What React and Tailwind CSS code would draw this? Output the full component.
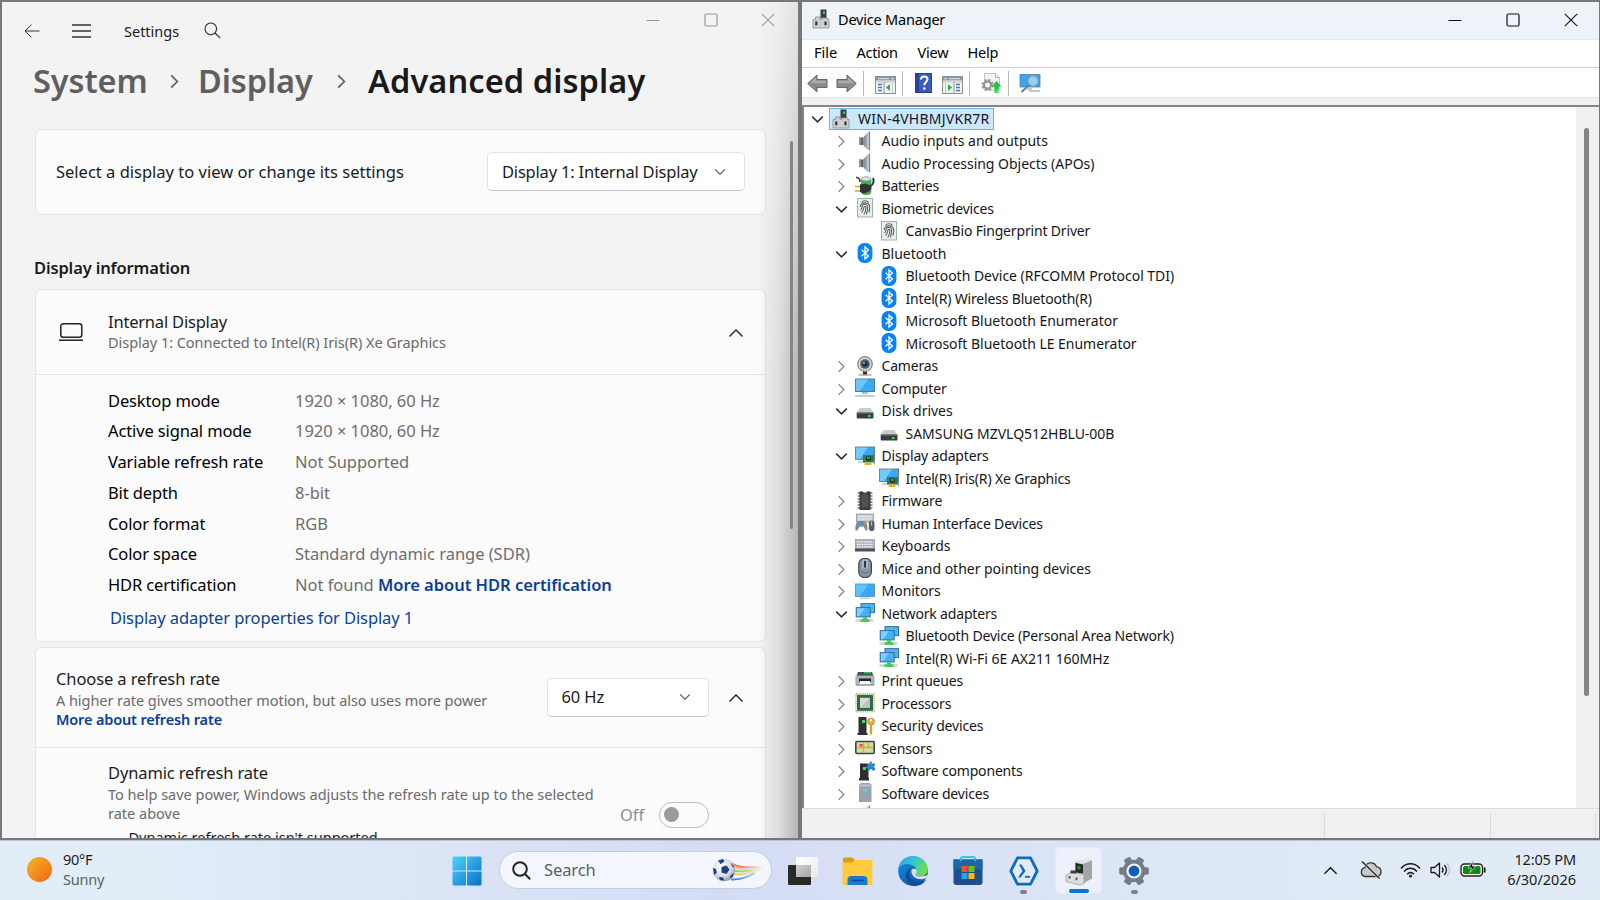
const DISPLAY_INFO = [
  { label: 'Desktop mode', value: '1920 × 1080, 60 Hz' },
  { label: 'Active signal mode', value: '1920 × 1080, 60 Hz' },
  { label: 'Variable refresh rate', value: 'Not Supported' },
  { label: 'Bit depth', value: '8-bit' },
  { label: 'Color format', value: 'RGB' },
  { label: 'Color space', value: 'Standard dynamic range (SDR)' },
  { label: 'HDR certification', value: 'Not found', link: 'More about HDR certification' },
];

const DEVICES = [
  { label: 'Audio inputs and outputs', icon: SpeakerIcon },
  { label: 'Audio Processing Objects (APOs)', icon: SpeakerIcon },
  { label: 'Batteries', icon: BatteriesIcon },
  { label: 'Biometric devices', icon: FingerprintIcon, children: ['CanvasBio Fingerprint Driver'] },
  {
    label: 'Bluetooth',
    icon: BluetoothIcon,
    children: [
      'Bluetooth Device (RFCOMM Protocol TDI)',
      'Intel(R) Wireless Bluetooth(R)',
      'Microsoft Bluetooth Enumerator',
      'Microsoft Bluetooth LE Enumerator',
    ],
  },
  { label: 'Cameras', icon: CameraIcon },
  { label: 'Computer', icon: ComputerIcon },
  { label: 'Disk drives', icon: DiskIcon, children: ['SAMSUNG MZVLQ512HBLU-00B'] },
  { label: 'Display adapters', icon: DisplayAdapterIcon, children: ['Intel(R) Iris(R) Xe Graphics'] },
  { label: 'Firmware', icon: FirmwareIcon },
  { label: 'Human Interface Devices', icon: HidIcon },
  { label: 'Keyboards', icon: KeyboardIcon },
  { label: 'Mice and other pointing devices', icon: MouseIcon },
  { label: 'Monitors', icon: MonitorIcon },
  {
    label: 'Network adapters',
    icon: NetworkIcon,
    children: ['Bluetooth Device (Personal Area Network)', 'Intel(R) Wi-Fi 6E AX211 160MHz'],
  },
  { label: 'Print queues', icon: PrinterIcon },
  { label: 'Processors', icon: ProcessorIcon },
  { label: 'Security devices', icon: SecurityIcon },
  { label: 'Sensors', icon: SensorIcon },
  { label: 'Software components', icon: SoftwareComponentIcon },
  { label: 'Software devices', icon: SoftwareDeviceIcon },
];

// Labels that keep the font's natural spacing
const NORMAL_SPACING = [
  'Audio inputs and outputs',
  'Bluetooth',
  'Bluetooth Device (RFCOMM Protocol TDI)',
  'Disk drives',
  'SAMSUNG MZVLQ512HBLU-00B',
  'Keyboards',
  'Mice and other pointing devices',
  'Monitors',
  'Intel(R) Wi-Fi 6E AX211 160MHz',
  'Audio Processing Objects (APOs)',
  'Microsoft Bluetooth Enumerator',
  'Microsoft Bluetooth LE Enumerator',
];

/* ---------- Tree icons (20x20) ---------- */

function Svg20({ children }) {
  return <svg viewBox="0 0 20 20" className="w-5 h-5 shrink-0">{children}</svg>;
}

function SpeakerIcon() {
  return (
    <Svg20>
      <path d="M4 6.500h4v7.500H4z" fill="#5d656d" />
      <path d="M4 6.500h2v7.500H4z" fill="#8d959c" />
      <path d="M8 6.500L13 1.500v17.500L8 14z" fill="#8e979f" />
      <path d="M11.500 2.500L15 0v20l-3.500-3.500z" fill="#bcc3c9" />
      <path d="M14.600 0.600v18.800" stroke="#6d757c" strokeWidth="0.900" />
    </Svg20>
  );
}

function BatteriesIcon() {
  return (
    <Svg20>
      <rect x="6.500" y="1" width="9.500" height="17.500" rx="3" fill="#3fb54a" stroke="#4b8452" strokeWidth="0.6" />
      <ellipse cx="11.200" cy="2.800" rx="4.600" ry="2" fill="#dfe6ee" stroke="#8b93a5" strokeWidth="0.6" />
      <path d="M1 1.500c3-.5 4 2 4 4.500" fill="none" stroke="#333" strokeWidth="1.600" />
      <path d="M0 10.500h6M0 15h6" stroke="#d9a03c" strokeWidth="1.700" />
      <path d="M5 8.500l6-1 5 2.500c1 2 0 4-2 5.500l-5 2-4-1.500z" fill="#2e3234" />
      <path d="M15 10c4-1 4-6 3-8" fill="none" stroke="#333" strokeWidth="2" />
    </Svg20>
  );
}

function FingerprintIcon() {
  return (
    <Svg20>
      <rect x="2.500" y="0.500" width="15" height="18.500" fill="#e8eeeb" stroke="#9cb5ab" />
      <g fill="none" stroke="#5a6060" strokeWidth="1.100">
        <path d="M6.500 4.300c1.500-2 5.500-2 7 0" />
        <path d="M5.300 9c-.3-5.500 9.700-5.500 9.400 0 0 2.500-.2 4-.9 5.500" />
        <path d="M5.600 12c1.600-1 1.200-3 1.600-4 .8-2.300 4.800-2.300 5.400.3.300 3-.3 5.700-1.300 8.200" />
        <path d="M6.500 14.500c2-1.500 2-3.500 2.300-5 .3-1.300 2-1.300 2.200 0 0 2.500-.7 5-2.200 7" />
      </g>
    </Svg20>
  );
}

function BluetoothIcon() {
  return (
    <Svg20>
      <rect x="2.600" y="0" width="14.800" height="20" rx="6.500" fill="#0a84f5" />
      <path d="M6.600 6.700l6.800 6.400-3.400 3V3.900l3.400 3-6.800 6.400" fill="none" stroke="#fff" strokeWidth="1.300" />
    </Svg20>
  );
}

function CameraIcon() {
  return (
    <Svg20>
      <path d="M3.500 19h13" stroke="#a6a6a6" strokeWidth="1.400" />
      <path d="M8 14h4v4.500H8z" fill="#333" />
      <circle cx="10" cy="8" r="7.300" fill="#d6d6d6" stroke="#8b8b8b" strokeWidth="1.300" />
      <circle cx="10" cy="8" r="4.800" fill="#555c66" />
      <circle cx="10" cy="8" r="2.600" fill="#1d2b45" />
      <circle cx="9" cy="7" r="1.100" fill="#8fb7e6" />
    </Svg20>
  );
}

function ComputerIcon() {
  return (
    <Svg20>
      <rect x="0.600" y="1" width="19" height="12.500" fill="#39a9f4" stroke="#4f6f8b" strokeWidth="0.9" />
      <path d="M1 1.500h12L5 13H1z" fill="#6cc6fb" />
      <path d="M7 14h6v2H7z" fill="#a9bccb" />
      <path d="M0.500 17h19l.5 1.800H0z" fill="#b5c6d3" />
    </Svg20>
  );
}

function DiskIcon() {
  return (
    <Svg20>
      <path d="M4.500 7h11l3 5h-17z" fill="#c9cccf" />
      <rect x="1.700" y="11.500" width="16.800" height="6" rx="0.800" fill="#3a3d40" />
      <path d="M2 12h16.300" stroke="#777c80" />
      <rect x="13" y="14" width="2.500" height="2" fill="#37e04c" />
    </Svg20>
  );
}

function DisplayAdapterIcon() {
  return (
    <Svg20>
      <rect x="0.600" y="1" width="19" height="12.500" fill="#39a9f4" stroke="#4f7f9b" strokeWidth="0.9" />
      <path d="M1 1.500h12L5 13H1z" fill="#74c8fa" />
      <path d="M3 16h6" stroke="#b7c6d3" strokeWidth="1.500" />
      <rect x="8" y="9" width="11" height="7.500" fill="#2f7d4c" />
      <rect x="11" y="10.500" width="5" height="4" fill="#18351f" />
      <path d="M12 12h3" stroke="#8fe09b" />
      <path d="M9.500 17.800h7" stroke="#eeb222" strokeWidth="2.400" />
      <path d="M19.300 1.500v17" stroke="#6d7a80" strokeWidth="0.9" />
    </Svg20>
  );
}

function FirmwareIcon() {
  return (
    <Svg20>
      <path d="M2.500 2h15M2.500 5h15M2.500 8h15M2.500 11h15M2.500 14h15M2.500 17h15" stroke="#777" strokeWidth="1.500" />
      <path d="M4.500 0.500H8a2 2 0 0 0 4 0h3.500v18.500h-11z" fill="#3b3b3b" />
      <path d="M6.500 3.500h7v13h-7z" fill="#535353" />
    </Svg20>
  );
}

function HidIcon() {
  return (
    <Svg20>
      <rect x="1.500" y="1" width="17" height="8" fill="#c2c9cf" stroke="#8d979f" strokeWidth="0.8" />
      <path d="M3 3.500h14M3 6h14" stroke="#fff" strokeWidth="1.200" strokeDasharray="1.500 0.700" />
      <path d="M0.500 17.500c-.5-5 1-9 3-9.500h6c2 .5 3 4 3 9.500h-2l-2-4H4.500l-2 4z" fill="#7f8b99" />
      <circle cx="6" cy="10" r="1.900" fill="#2f9de8" />
      <rect x="9" y="8.500" width="2.600" height="2.600" fill="#e48a2c" />
      <rect x="13.800" y="7.500" width="5.700" height="10.500" rx="2.800" fill="#56606c" />
      <path d="M16.600 8v4.500" stroke="#c8d0d8" strokeWidth="0.9" />
    </Svg20>
  );
}

function KeyboardIcon() {
  return (
    <Svg20>
      <rect x="0.300" y="3.500" width="19.500" height="11" fill="#a9b2bb" stroke="#8f979f" strokeWidth="0.6" />
      <path d="M2 5.800h16M2 8.300h16M2 10.800h16" stroke="#f4f6f8" strokeWidth="1.300" strokeDasharray="1.700 0.600" />
      <path d="M0 12.500h20v3H0z" fill="#4a5058" />
    </Svg20>
  );
}

function MouseIcon() {
  return (
    <Svg20>
      <rect x="3.800" y="0.500" width="12.600" height="19" rx="5.500" fill="#8996a5" stroke="#3a424b" strokeWidth="1.200" />
      <path d="M7 1.500h6v9H7z" fill="#a9b5c1" />
      <path d="M10 3v6.500" stroke="#23282e" strokeWidth="1.800" />
      <path d="M6 13.500c2.500 2 5.500 2 8 0" fill="none" stroke="#5b6672" />
    </Svg20>
  );
}

function MonitorIcon() {
  return (
    <Svg20>
      <rect x="0.600" y="3" width="19" height="12.500" fill="#39a9f4" stroke="#5a8fb4" strokeWidth="0.9" />
      <path d="M1 3.500h12L5 15H1z" fill="#63c1fa" />
      <path d="M5 17.200h10" stroke="#b9c9d5" strokeWidth="1.300" />
    </Svg20>
  );
}

function NetworkIcon() {
  return (
    <Svg20>
      <rect x="6" y="0.600" width="13.500" height="9" fill="#4db5f3" stroke="#33719a" strokeWidth="1" />
      <path d="M0.500 17.500h18" stroke="#cfd6d8" strokeWidth="2.600" />
      <rect x="1.200" y="4.600" width="14" height="9.300" fill="#45b0f5" stroke="#33719a" strokeWidth="1" />
      <path d="M2 5.200h8L4 13.200H2z" fill="#7fd0fb" />
      <path d="M8 14.200h4v2h2.500v2.800H5.500v-2.800H8z" fill="#43cc52" />
    </Svg20>
  );
}

function PrinterIcon() {
  return (
    <Svg20>
      <path d="M3 1h14l1.500 4H1.500z" fill="#474d53" />
      <path d="M9 1.800h7" stroke="#35d06a" strokeWidth="1.300" />
      <rect x="0.400" y="4.500" width="19.200" height="10" rx="1.200" fill="#aab2ba" />
      <path d="M4 7.500h12v3.500H4z" fill="#23272b" />
      <path d="M5 10h10l1 3.500H4z" fill="#f6f6f6" />
      <path d="M1 14h18" stroke="#7b838b" />
    </Svg20>
  );
}

function ProcessorIcon() {
  return (
    <Svg20>
      <rect x="1" y="0.800" width="18" height="18" fill="none" stroke="#c9ad62" strokeWidth="1.600" strokeDasharray="1.100 1.100" />
      <rect x="2" y="1.800" width="16" height="16" fill="#2e6b4b" />
      <rect x="5" y="4.800" width="10" height="10" fill="#d8dad8" />
      <path d="M15 4.800v10H5z" fill="#bfc3c0" />
    </Svg20>
  );
}

function SecurityIcon() {
  return (
    <Svg20>
      <path d="M3.500 1h8v16h1v2h-10v-2h1z" fill="#2f3133" />
      <rect x="7" y="4" width="3" height="3" fill="#3be052" />
      <circle cx="16" cy="5.500" r="3.600" fill="#e5b04b" stroke="#a87c28" strokeWidth="0.6" />
      <circle cx="16" cy="4.300" r="1" fill="#fff" />
      <path d="M14.800 8.500h2.400v10h-2.400z" fill="#d99f35" />
    </Svg20>
  );
}

function SensorIcon() {
  return (
    <Svg20>
      <rect x="0.800" y="3.500" width="18.400" height="12" rx="1.200" fill="#cfe0a0" stroke="#3f4640" strokeWidth="1.600" />
      <path d="M2 9.500h16M8.500 4.500v10M13.500 4.500v5" stroke="#d6a94a" strokeWidth="1.400" />
      <rect x="4.500" y="6" width="3" height="2.600" fill="#e0523e" />
    </Svg20>
  );
}

function SoftwareComponentIcon() {
  return (
    <Svg20>
      <path d="M5 2.500h8.500V17h.5v2.500H4V17h1z" fill="#2c2e30" />
      <rect x="8" y="6" width="3" height="3" fill="#3be052" />
      <path d="M12.500 2.500h2.300V0.500h2v2H20v2.300h-1v1.800h1V9.500h-3V8.300h-2v1.200h-2.500V7h-1V5h1z" fill="#2d86d4" />
    </Svg20>
  );
}

function SoftwareDeviceIcon() {
  return (
    <Svg20>
      <path d="M4 1.500L6 0h8.500l2 1.500v17.500H4z" fill="#9aa3ab" />
      <path d="M4 1.500h12.500v2H4z" fill="#bcc4ca" />
      <rect x="8.500" y="6" width="3.200" height="3" fill="#49d6ea" />
    </Svg20>
  );
}

function DeviceManagerIcon() {
  return (
    <svg viewBox="0 0 18 20" className="w-[18px] h-5 shrink-0">
      <path d="M8.500 0.500h6v9h-6z" fill="#3c3f41" />
      <rect x="11" y="2.500" width="2" height="2.300" fill="#36e048" />
      <path d="M1 10.500h2.500V8h4.500v2.500h1.500V9h6v1.500H17v8.500H1z" fill="#cdd0d3" stroke="#8a8e92" strokeWidth="0.8" />
      <path d="M4.300 12.500v3.800M13.500 12.500v3.800" stroke="#25282b" strokeWidth="2" />
    </svg>
  );
}

/* ---------- Shared glyphs ---------- */

function Chevron({ dir, className }) {
  const paths = {
    down: 'M1.500 4.500L8 11l6.500-6.500',
    up: 'M1.500 11.500L8 5l6.500 6.500',
    right: 'M4.500 1.500L11 8l-6.500 6.500',
  };
  return (
    <svg viewBox="0 0 16 16" className={className} fill="none" stroke="currentColor">
      <path d={paths[dir]} />
    </svg>
  );
}

function WindowControls({ className }) {
  return (
    <div className={className}>
      <svg viewBox="0 0 14 14" className="w-3.5 h-3.5" fill="none" stroke="currentColor"><path d="M0.500 7.500h13" /></svg>
      <svg viewBox="0 0 14 14" className="w-3.5 h-3.5" fill="none" stroke="currentColor" strokeWidth="1.200"><rect x="1" y="1" width="12" height="12" rx="1.500" /></svg>
      <svg viewBox="0 0 14 14" className="w-3.5 h-3.5" fill="none" stroke="currentColor" strokeWidth="1.100"><path d="M0.800 0.800l12.400 12.400M13.200 0.800L0.800 13.200" /></svg>
    </div>
  );
}

function Select({ label, className, labelClass }) {
  return (
    <div className={`flex items-center justify-between h-[39px] rounded-[5px] bg-white border border-[#e3e3e3] border-b-[#c4c4c4] ${className}`}>
      <span className={labelClass}>{label}</span>
      <Chevron dir="down" className="w-3 h-3 text-[#5a5a5a] stroke-[1.600]" />
    </div>
  );
}

/* ---------- Settings ---------- */

function SettingsWindow() {
  return (
    <section className="relative w-[800px] h-full overflow-hidden bg-[#f3f3f3] border-2 border-[#787676] text-[16.5px] text-[#1b1b1b]">
      <header className="flex items-start justify-between h-[56.5px]">
        <div className="flex items-center h-5 mt-[18.500px] pl-[21.500px]">
          <svg viewBox="0 0 16 14" className="w-4 h-3.5" fill="none" stroke="#333"><path d="M15.500 7H1M7.500 0.700L1 7l6.500 6.300" /></svg>
          <svg viewBox="0 0 19 14" className="w-[19px] h-3.5 ml-[32.500px]" fill="none" stroke="#333" strokeWidth="1.300"><path d="M0 1h19M0 7h19M0 13h19" /></svg>
          <span className="ml-[33px] text-[14.5px] leading-5">Settings</span>
          <svg viewBox="0 0 17 17" className="w-[17px] h-[17px] ml-[25px] -mt-px" fill="none" stroke="#333" strokeWidth="1.200"><circle cx="6.800" cy="6.800" r="5.800" /><path d="M11 11l5.200 5.200" /></svg>
        </div>
        <WindowControls className="flex gap-[43.500px] mt-[11px] mr-[23px] text-[#999]" />
      </header>

      <div className="w-[731px] ml-[33px]">
        <h1 className="flex items-center h-11 text-[32.5px] leading-[44px] font-semibold text-[#5f5f5f] whitespace-nowrap">
          <span className="-ml-[2px] w-[115px] tracking-[-0.1px]">System</span>
          <Chevron dir="right" className="w-[15px] h-[15px] ml-[19px] mt-0.5 stroke-[1.800]" />
          <span className="ml-[16px] w-[116px] tracking-[-0.1px]">Display</span>
          <Chevron dir="right" className="w-[15px] h-[15px] ml-[20px] mt-0.5 stroke-[1.800]" />
          <span className="ml-[19px] tracking-[0.1px] text-[#1a1a1a]">Advanced display</span>
        </h1>

        <div className="flex items-center justify-between h-[86px] mt-[26px] pl-5 pr-5 rounded-md bg-[#fbfbfb] border border-[#e5e5e5]">
          <span className="pt-[2.500px]">Select a display to view or change its settings</span>
          <Select label="Display 1: Internal Display" className="w-[258px] pl-[14px] pr-[18px]" labelClass="pt-[1.500px] tracking-[-0.2px]" />
        </div>

        <h2 className="-ml-px mt-[41px] leading-6 font-semibold tracking-[-0.15px]">Display information</h2>

        <div className="h-[353px] mt-[9px] rounded-md bg-[#fbfbfb] border border-[#e5e5e5]">
          <div className="flex items-center h-[85.500px] pr-[21.500px] border-b border-[#e5e5e5]">
            <svg viewBox="0 0 26 20" className="w-[26px] h-5 ml-[21.500px]" fill="none" stroke="#222" strokeWidth="1.500">
              <rect x="2.800" y="1.800" width="21" height="13.500" rx="2.500" />
              <path d="M1 18.200h24" />
            </svg>
            <div className="ml-[24.500px] grow">
              <div className="leading-[21px] tracking-[-0.2px]">Internal Display</div>
              <div className="text-[14.5px] leading-5 tracking-[-0.04px] text-[#6a6a6a]">Display 1: Connected to Intel(R) Iris(R) Xe Graphics</div>
            </div>
            <Chevron dir="up" className="w-4 h-4 mt-0.5 stroke-[1.300]" />
          </div>
          <div className="pl-[72px] pt-[10.500px]">
            {DISPLAY_INFO.map((row) => (
              <div key={row.label} className="flex h-[30.800px] leading-[30.800px]">
                <span className="w-[187px] tracking-[-0.13px] text-black">{row.label}</span>
                <span className="tracking-[-0.03px] text-[#6e6e6e]">
                  {row.value}
                  {row.link && <span className="font-semibold text-[#0a3f95]"> {row.link}</span>}
                </span>
              </div>
            ))}
            <div className="mt-[1.500px] pl-[2px] leading-[30px] tracking-[-0.1px] text-[#0a4299]">Display adapter properties for Display 1</div>
          </div>
        </div>

        <div className="h-[300px] mt-[5px] rounded-md bg-[#fbfbfb] border border-[#e5e5e5]">
          <div className="flex items-center h-[100px] pl-5 pr-[21.500px] border-b border-[#e5e5e5]">
            <div className="grow pt-0.5 text-[14.5px] leading-[19px]">
              <div className="mb-0.5 text-[16.5px] leading-[21px] tracking-[-0.11px]">Choose a refresh rate</div>
              <div className="tracking-[-0.05px] text-[#6a6a6a]">A higher rate gives smoother motion, but also uses more power</div>
              <div className="font-semibold tracking-[-0.15px] text-[#0a3f95]">More about refresh rate</div>
            </div>
            <Select label="60 Hz" className="w-[162px] pl-[13.500px] pr-[17px] mr-[18.500px]" labelClass="pt-[1.500px] tracking-[-0.1px]" />
            <Chevron dir="up" className="w-4 h-4 mt-0.5 stroke-[1.300]" />
          </div>
          <div className="flex justify-between pl-[72px] pr-[56px] pt-3.5">
            <div className="text-[14.5px] leading-[19px] text-[#6a6a6a]">
              <div className="mb-[2px] text-[16.5px] leading-[21px] tracking-[-0.13px] text-[#1b1b1b]">Dynamic refresh rate</div>
              <div className="w-[495px]">To help save power, Windows adjusts the refresh rate up to the selected rate above</div>
            </div>
            <div className="flex items-center gap-[15px] h-[26px] mt-[40px] text-[#8f8f8f]">
              <span className="pt-[2.500px] tracking-[-0.1px]">Off</span>
              <div className="flex items-center w-[50px] h-[26px] pl-1 rounded-full border-[1.500px] border-[#bdbdbd]">
                <div className="w-[15px] h-[15px] rounded-full bg-[#9b9b9b]" />
              </div>
            </div>
          </div>
          <div className="-mt-px pl-[92.500px] text-[14.5px] leading-5">Dynamic refresh rate isn&apos;t supported</div>
        </div>
      </div>

      {/* Shade cast by the window on the right */}
      <div className="absolute top-0 right-0 w-10 h-full bg-gradient-to-r from-transparent via-black/8 to-black/25 [mask-image:linear-gradient(to_bottom,rgba(0,0,0,0.250),black_45%)]" />
      <div className="absolute top-[139px] right-[5.500px] w-[2.500px] h-[388px] rounded-full bg-[#858585]" />
    </section>
  );
}

/* ---------- Device Manager ---------- */

function PanelIcon({ flip }) {
  return (
    <svg viewBox="0 0 21 18" className={`w-[21px] h-[18px] ${flip ? '-scale-x-100' : ''}`}>
      <rect x="0.500" y="0.500" width="20" height="17" fill="#f4f4f4" stroke="#8b9096" />
      <path d="M1 1h19v3.500H1z" fill="#8e98a3" />
      <path d="M3 2.700h11M16 2.700h3" stroke="#dfe4e9" />
      <path d="M1 6h19" stroke="#b9bec4" />
      <path d="M3 8.500h4M3 11.500h4M3 14.500h4" stroke="#3f7ac0" strokeWidth="1.400" />
      <path d="M9 6v11.500" stroke="#8b9096" />
      <path d="M15 8v7l-4-3.500z" fill="#2cab3a" />
      <path d="M17.500 7v10" stroke="#c3c7cb" />
    </svg>
  );
}

function ArrowIcon({ flip }) {
  return (
    <svg viewBox="0 0 21 19" className={`w-[21px] h-[19px] ${flip ? '-scale-x-100' : ''}`}>
      <path d="M0.700 9.500L10 1v4.500h10v8H10V18z" fill="#8b8b8b" stroke="#666" strokeWidth="1" />
      <path d="M2.500 9.200L9 3.300v3.500h10v2.400z" fill="#a9a9a9" />
    </svg>
  );
}

function ToolSeparator({ className }) {
  return <div className={`w-px h-[25px] bg-[#b9b9b9] ${className}`} />;
}

function Toolbar() {
  return (
    <div className="flex items-center h-[29px] pl-[5px] pt-0.5 bg-white">
      <ArrowIcon />
      <div className="ml-[8px]"><ArrowIcon flip /></div>
      <ToolSeparator className="ml-1.5" />
      <div className="ml-[11px] mt-1"><PanelIcon /></div>
      <ToolSeparator className="ml-[5.500px]" />
      <svg viewBox="0 0 17 20" className="w-[17px] h-5 ml-[12.500px]">
        <rect x="0.500" y="0.500" width="16" height="19" fill="#3a5bc4" stroke="#28408c" />
        <path d="M1 1h3v18H1z" fill="#2a459f" />
        <path d="M6 6.500c0-4 6.500-4 6.500-.300 0 2.800-3.200 2.800-3.200 6" fill="none" stroke="#fff" strokeWidth="2" />
        <circle cx="9.300" cy="15.500" r="1.300" fill="#fff" />
      </svg>
      <div className="ml-[10px] mt-1"><PanelIcon flip /></div>
      <ToolSeparator className="ml-[6px]" />
      <svg viewBox="0 0 21 20" className="w-[21px] h-5 ml-[10.500px]">
        <path d="M3.500 0.500h11l4 4V17h-15z" fill="#f3f3f3" stroke="#c6c6c6" />
        <path d="M14.500 0.500v4h4" fill="none" stroke="#b5b5b5" />
        <circle cx="6.500" cy="12" r="4.500" fill="none" stroke="#9a9a9a" strokeWidth="3.200" strokeDasharray="2.200 1.330" />
        <circle cx="6.500" cy="12" r="3.500" fill="#f3f3f3" stroke="#8f8f8f" strokeWidth="1.800" />
        <path d="M15.500 8l5 5.500h-2.800V16h-4.400v-2.500h-2.800z" fill="#1fc73a" />
        <path d="M13.300 17h4.400M13.300 19h4.400" stroke="#1fc73a" strokeWidth="1.300" />
      </svg>
      <ToolSeparator className="ml-[6px]" />
      <svg viewBox="0 0 22 20" className="w-[22px] h-5 ml-[10.500px]">
        <rect x="1" y="1.500" width="20" height="12.500" fill="#37a6ee" stroke="#4b86ae" strokeWidth="0.8" />
        <path d="M8 16h5M10 18h11" stroke="#a9bccb" strokeWidth="1.500" />
        <circle cx="14" cy="8" r="5.300" fill="#8fd0f8" stroke="#7d99ad" strokeWidth="1.300" />
        <path d="M10 12l-7.500 7" stroke="#6f7f8b" strokeWidth="2" />
      </svg>
    </div>
  );
}

function TreeLabel({ children }) {
  return (
    <span className={NORMAL_SPACING.includes(children) ? 'tracking-[-0.020px]' : 'tracking-[-0.170px]'}>
      {children}
    </span>
  );
}

function DeviceTree() {
  return (
    <div className="grow overflow-hidden pt-[0.900px] text-sm leading-[22.5px] text-[#161616] whitespace-nowrap">
      <div className="flex items-center h-[22.5px] pl-[7px]">
        <Chevron dir="down" className="w-[13px] h-[13px] text-[#333] stroke-2" />
        <div className="flex items-center h-[22.5px] ml-[5px] pl-[2px] pr-[3px] bg-[#cce8ff] border border-[#62b5ee]">
          <DeviceManagerIcon />
          <span className="ml-[8px] tracking-[0.25px]">WIN-4VHBMJVKR7R</span>
        </div>
      </div>
      {DEVICES.map((device) => {
        const Icon = device.icon;
        return (
          <div key={device.label}>
            <div className="flex items-center h-[22.5px] pl-[30.500px]">
              {device.children
                ? <Chevron dir="down" className="w-[13px] h-[13px] text-[#333] stroke-2" />
                : <Chevron dir="right" className="w-[13px] h-[13px] text-[#8e8e8e] stroke-[1.700]" />}
              <div className="ml-[7.500px] mr-[6.500px] -mt-0.5"><Icon /></div>
              <TreeLabel>{device.label}</TreeLabel>
            </div>
            {device.children?.map((child) => (
              <div key={child} className="flex items-center h-[22.5px] pl-[75px]">
                <div className="mr-[6.500px] -mt-0.5"><Icon /></div>
                <TreeLabel>{child}</TreeLabel>
              </div>
            ))}
          </div>
        );
      })}
      <div className="pl-[51px]"><SpeakerIcon /></div>
    </div>
  );
}

function DeviceManagerWindow() {
  return (
    <section className="flex flex-col w-[800px] h-full bg-white border-2 border-r border-[#787676]">
      <header className="flex items-center justify-between h-[37.500px] pl-[10px] pr-[21.500px] bg-[#eef3f9] border-b border-[#e4e8ec]">
        <div className="flex items-center pb-0.5 text-[14.5px] leading-5 tracking-[-0.2px]">
          <DeviceManagerIcon />
          <span className="ml-[8px]">Device Manager</span>
        </div>
        <WindowControls className="flex gap-[44px] pb-px text-[#111]" />
      </header>
      <nav className="flex h-7 text-[14.5px] leading-[25px] border-b border-[#cfcfcf] pl-3">
        <span className="w-[42.500px]">File</span>
        <span className="w-[61px] tracking-[-0.3px]">Action</span>
        <span className="w-[50px] tracking-[-0.2px]">View</span>
        <span className="tracking-[-0.2px]">Help</span>
      </nav>
      <Toolbar />
      <div className="h-[8.500px] bg-[#f0f0f0] border-t border-[#e2e2e2]" />
      <div className="flex h-[703px] border-t-2 border-l-2 border-[#858585] overflow-hidden">
        <DeviceTree />
        <div className="w-[23px] pl-[8px] pt-[21px] bg-[#f0f0f0]">
          <div className="w-[5px] h-[568px] rounded-full bg-[#858585]" />
        </div>
      </div>
      <footer className="flex justify-end grow pt-1 bg-[#f0f0f0] border-t border-[#dcdcdc]">
        <div className="w-[166px] border-l border-[#dadada]" />
        <div className="w-[106px] mr-[3px] border-x border-[#dadada]" />
      </footer>
    </section>
  );
}

/* ---------- Taskbar ---------- */

function StartIcon() {
  return (
    <svg viewBox="0 0 30 30" className="w-[30px] h-[30px]">
      <defs>
        <linearGradient id="start" x1="0" y1="0" x2="1" y2="1">
          <stop offset="0" stopColor="#4fd2fb" />
          <stop offset="1" stopColor="#0670cc" />
        </linearGradient>
      </defs>
      <path d="M1.500 0.500H14v14H0.500v-13zM15 0.500h13.500l1 1V14.500H15zM0.500 15.500H14v14H1.500l-1-1zM15 15.500h14.500v13l-1 1H15z" fill="url(#start)" />
    </svg>
  );
}

function SoccerIcon() {
  return (
    <svg viewBox="0 0 52 24" className="w-[52px] h-6">
      <defs>
        <linearGradient id="trail" x1="0" x2="1">
          <stop offset="0" stopColor="#f3f7fd" stopOpacity="0" />
          <stop offset="1" stopColor="#f3f7fd" />
        </linearGradient>
        <radialGradient id="ball" cx="0.4" cy="0.35" r="0.7">
          <stop offset="0" stopColor="#fff" />
          <stop offset="0.650" stopColor="#d5d8de" />
          <stop offset="1" stopColor="#8a8f9b" />
        </radialGradient>
      </defs>
      <g fill="none" strokeWidth="2">
        <path d="M19 5c8 5.500 17 4.500 32 4" stroke="#f2703a" />
        <path d="M21 8.500c8 4.500 16 3 28 2" stroke="#f8b7a0" />
        <path d="M22 12.500c8 2 15 1 25-1" stroke="#8fd05e" />
        <path d="M22 16c8 1.500 14 0 23-3.500" stroke="#f7c36b" />
        <path d="M19 21.500c9 .5 16-2 24-6.500" stroke="#3d8fe8" />
      </g>
      <rect x="26" y="2" width="26" height="21" fill="url(#trail)" />
      <circle cx="12" cy="12" r="11.200" fill="url(#ball)" />
      <g fill="#1c3f86">
        <path d="M9.500 9l5-1.500 3 4-3 4.500-5-1.500z" />
        <path d="M6 2.500l5-1.500 1.500 2.500-4 2.500zM1 10l3 1 .8 4L2 17zM7 19l4 .5 1 3-4-.500zM18 18.500l3.500-3.500-.5 3.500-2.500 2zM19 4.500l3.500 5-2.500-1z" />
      </g>
    </svg>
  );
}

function TaskViewIcon() {
  return (
    <svg viewBox="0 0 30 29" className="w-[30px] h-[29px]">
      <defs>
        <linearGradient id="pane" x1="0" y1="0" x2="1" y2="1">
          <stop offset="0" stopColor="#fff" />
          <stop offset="1" stopColor="#e9ebf0" />
        </linearGradient>
        <linearGradient id="overlap" x1="0" y1="0" x2="1" y2="1">
          <stop offset="0" stopColor="#d2d2d2" />
          <stop offset="1" stopColor="#a5a5a6" />
        </linearGradient>
      </defs>
      <rect x="0" y="8" width="23" height="20" rx="1" fill="#2b2928" />
      <rect x="8" y="0" width="22" height="20" rx="1" fill="url(#pane)" />
      <path d="M8 8h15v12H9a1 1 0 0 1-1-1z" fill="url(#overlap)" />
    </svg>
  );
}

function FolderIcon() {
  return (
    <svg viewBox="0 0 31 29" className="w-[31px] h-[29px]">
      <path d="M1 2a1.500 1.500 0 0 1 1.500-1.500H10l3 2.500-2 5H1z" fill="#e39a0b" />
      <path d="M0.500 5.500H10l3-2.500h16.500a1 1 0 0 1 1 1V27a1 1 0 0 1-1 1h-28a1 1 0 0 1-1-1z" fill="#ffcb3d" />
      <path d="M5.500 28v-5a4 4 0 0 1 4-4h12a4 4 0 0 1 4 4v5z" fill="#1c79cf" />
      <path d="M9.500 23.500h12" stroke="#0c4b8d" strokeWidth="1.600" />
    </svg>
  );
}

function EdgeIcon() {
  return (
    <svg viewBox="0 0 30 30" className="w-[30px] h-[30px]">
      <defs>
        <linearGradient id="edgeTop" x1="0" y1="0" x2="1" y2="0.5">
          <stop offset="0" stopColor="#2aa3e0" />
          <stop offset="0.500" stopColor="#32c3d2" />
          <stop offset="1" stopColor="#6be04e" />
        </linearGradient>
        <linearGradient id="edgeSide" x1="0" y1="0" x2="0.6" y2="1">
          <stop offset="0" stopColor="#1a92dd" />
          <stop offset="1" stopColor="#0b59b4" />
        </linearGradient>
      </defs>
      <circle cx="15" cy="15" r="14.800" fill="url(#edgeSide)" />
      <path d="M0.500 12.500C1.500 5 7.500 0.200 15 0.200c8.500 0 14.800 6.300 14.800 12.800 0 5-4 7.500-8 7.500-3 0-4.500-1.200-4.300-2.200 1.500-1 1.800-2.800 1-4.800C17.500 10.300 13.500 8 9 8 5.500 8 2 9.500.5 12.500z" fill="url(#edgeTop)" />
      <path d="M13.500 11.500c-4.500 5-2 13 5.500 14.500 3.500.6 7-.5 9.500-2.800-2.500 4.800-8 7.300-14 6.600C8.500 28.500 7 21 8.500 17c1-3 3-4.800 5-5.500z" fill="#124c93" />
      <path d="M13.500 14c-.8 6.500 5.500 10.500 12 9 1.200-.3 2.200-.8 3-1.200.6-.3 1 .2.700.700l-.7 1.200H31V19l-9.200 1.500c-3 0-4.500-1.200-4.300-2.200 1.500-1 1.800-2.800 1-4.800-1.500-1-4-1-5 .500z" fill="#d6def3" />
    </svg>
  );
}

function StoreIcon() {
  return (
    <svg viewBox="0 0 30 30" className="w-[30px] h-[30px]">
      <path d="M8 5V2.500A1.500 1.500 0 0 1 9.500 1h11A1.500 1.500 0 0 1 22 2.500V5" fill="none" stroke="#38c0f0" strokeWidth="1.800" />
      <path d="M0.500 3.500h29V26a3 3 0 0 1-3 3h-23a3 3 0 0 1-3-3z" fill="#1b4f8e" />
      <path d="M0.500 3.500h29V13h-29z" fill="#1d66a8" />
      <path d="M8 5V3.500M22 5V3.500" fill="none" stroke="#38c0f0" strokeWidth="1.800" />
      <path d="M8.500 10h6v6h-6z" fill="#f25022" />
      <path d="M15.500 10h6v6h-6z" fill="#7fba00" />
      <path d="M8.500 17h6v6h-6z" fill="#22a5ec" />
      <path d="M15.500 17h6v6h-6z" fill="#ffb900" />
    </svg>
  );
}

function PowerShellIcon() {
  return (
    <svg viewBox="0 0 30 30" className="w-[30px] h-[30px]">
      <path d="M8.500 1.800h13L28.200 15l-6.700 13.200h-13L1.800 15z" fill="#e3eaf7" stroke="#0f6cb8" strokeWidth="2.800" strokeLinejoin="round" />
      <path d="M10 8.500h2.500l4 6.500-5 6.500H9l4.500-6.500z" fill="#0f6cb8" />
      <path d="M16 20.800h5" stroke="#0f6cb8" strokeWidth="1.800" />
    </svg>
  );
}

function DeviceManagerLargeIcon() {
  return (
    <svg viewBox="0 0 28 28" className="w-7 h-7">
      <path d="M10 4l13-3 4 1.500v18L19 25l-9-3z" fill="#b9bbbb" />
      <path d="M10 4l13-3 4 1.500L18 6z" fill="#e6e7e7" />
      <path d="M18 6l9-3.500v18L18 25z" fill="#a3a6a6" />
      <path d="M10.500 5l7.500 1.500v9l-7.500-1z" fill="#232625" />
      <rect x="12.500" y="8" width="3" height="3.500" fill="#1d8e2d" />
      <path d="M1 17l6-3 12 2.500v9L15 27 1 23.500z" fill="#dcdddd" stroke="#96999a" strokeWidth="0.700" />
      <path d="M5.500 12.500h6v3h-6z" fill="#3b3f3f" />
      <path d="M4.500 18v2.800M11.500 19.500v2.800" stroke="#5a5d5e" strokeWidth="2" />
    </svg>
  );
}

function GearIcon() {
  return (
    <svg viewBox="0 0 32 30" className="w-8 h-[30px]">
      <g fill="#747d86">
        <circle cx="16" cy="15" r="11.300" />
        {[0, 60, 120].map((a) => (
          <rect key={a} x="1.200" y="11.300" width="29.600" height="7.400" rx="1.800" transform={`rotate(${a} 16 15)`} />
        ))}
      </g>
      <circle cx="16" cy="15" r="7.600" fill="#f1f4fa" />
      <circle cx="16" cy="15" r="5.400" fill="#0f5cb4" />
    </svg>
  );
}

function TaskButton({ children, active, running }) {
  return (
    <div className={`flex flex-col items-center w-[47px] h-[47px] pt-[9px] rounded-[5px] ${active ? 'bg-[#edf1fb] border border-[#e3e9f6]' : ''}`}>
      <div className="flex items-center justify-center h-[30px]">{children}</div>
      {running && <div className="w-[7px] h-1 mt-1 rounded-full bg-[#7c828d]" />}
      {active && <div className="w-5 h-1 mt-[3px] rounded-full bg-[#0b73d1]" />}
    </div>
  );
}

function Tray() {
  return (
    <div className="flex items-center pr-[24px] text-[#1b1b1b]">
      <Chevron dir="up" className="w-[15px] h-[15px] stroke-[1.600]" />
      <svg viewBox="0 0 22 18" className="w-[22px] h-[18px] ml-[22px] -mt-0.5">
        <path d="M5.500 15.500a4.500 4.500 0 0 1-.5-8.900 6 6 0 0 1 11.500-.8 4.900 4.900 0 0 1 .5 9.700z" fill="#c9c9c9" stroke="#333" strokeWidth="1.300" />
        <path d="M2 0.500L19.500 17.500" stroke="#e0eaf5" strokeWidth="2.500" />
        <path d="M2 0.500L19.500 17.500" stroke="#222" strokeWidth="1.400" />
      </svg>
      <svg viewBox="0 0 21 16" className="w-[21px] h-4 ml-[18px] -mt-0.5" fill="none" stroke="currentColor" strokeWidth="1.400">
        <path d="M1 6.500c5.500-6.300 13.500-6.300 19 0M4 9.500c3.800-4.300 9.200-4.300 13 0M7 12.300c2.200-2.400 4.800-2.400 7 0" />
        <circle cx="10.500" cy="14" r="1.500" fill="currentColor" stroke="none" />
      </svg>
      <svg viewBox="0 0 21 18" className="w-[21px] h-[18px] ml-[9px] -mt-0.5" fill="none" stroke="currentColor" strokeWidth="1.300">
        <path d="M1 6.500h3.500L9.500 2v14l-5-4.500H1z" strokeLinejoin="round" />
        <path d="M12 6.500c1.300 1.500 1.300 3.500 0 5M14.300 4c2.600 3 2.600 7 0 10" />
        <path d="M17 2.500c3.300 4 3.300 9 0 13" stroke="#b9c1cb" />
      </svg>
      <svg viewBox="0 0 26 18" className="w-[26px] h-[18px] ml-[9px] -mt-1">
        <rect x="1" y="4" width="21.500" height="12" rx="3.500" fill="#fff" stroke="#222" strokeWidth="1.400" />
        <rect x="3" y="6" width="17.500" height="8" rx="1.500" fill="#0f8a12" />
        <path d="M24.700 7.500v5" stroke="#222" strokeWidth="1.800" />
        <path d="M13.500 0.500L8 8h3.500l-1.500 4.500L16 6h-3.500z" fill="#222" stroke="#e2f0e6" strokeWidth="0.700" />
      </svg>
      <div className="w-[90px] pb-1 text-right text-[14.5px] leading-5">
        <div className="tracking-[-0.150px]">12:05 PM</div>
        <div>6/30/2026</div>
      </div>
    </div>
  );
}

function Taskbar() {
  return (
    <footer className="flex items-center justify-between h-[60px] bg-gradient-to-r from-[#e1edf7] from-10% via-[#d4dcf4] via-45% to-[#e0ebf6] to-85% border-t border-[#b9c3d8]">
      <div className="flex items-center w-[440px] pl-[26.500px]">
        <div className="w-[25px] h-[25px] mb-0.5 rounded-full bg-gradient-to-br from-[#f0b72b] to-[#f2600c]" />
        <div className="ml-[11.500px] pb-1 text-[14.5px] leading-5">
          <div className="tracking-[-0.3px] text-[#1b1b1b]">90°F</div>
          <div className="tracking-[-0.2px] text-[#5c6066]">Sunny</div>
        </div>
      </div>
      <div className="flex items-center grow pl-[12px]">
        <StartIcon />
        <div className="flex items-center w-[273px] h-[38px] ml-[16.500px] pl-[12.500px] pr-[7px] -mt-px rounded-full bg-[#f3f7fd] border border-[#c3cee3]">
          <svg viewBox="0 0 19 19" className="w-[19px] h-[19px]" fill="none" stroke="#222" strokeWidth="2"><circle cx="8" cy="8" r="6.800" /><path d="M12.800 12.800l5.400 5.400" /></svg>
          <span className="ml-[13px] grow text-[16.5px] leading-5 tracking-[-0.1px] text-[#5c5f64]">Search</span>
          <SoccerIcon />
        </div>
        <div className="flex items-center gap-[8.300px] ml-[7.500px]">
          <TaskButton><TaskViewIcon /></TaskButton>
          <TaskButton><FolderIcon /></TaskButton>
          <TaskButton><EdgeIcon /></TaskButton>
          <TaskButton><StoreIcon /></TaskButton>
          <TaskButton running><PowerShellIcon /></TaskButton>
          <TaskButton active><DeviceManagerLargeIcon /></TaskButton>
          <TaskButton running><GearIcon /></TaskButton>
        </div>
      </div>
      <Tray />
    </footer>
  );
}

export default function App() {
  return (
    <div className="w-[1600px] h-[900px] overflow-hidden font-['Noto_Sans','Open_Sans',sans-serif]">
      <main className="flex h-[840px]">
        <SettingsWindow />
        <DeviceManagerWindow />
      </main>
      <Taskbar />
    </div>
  );
}
